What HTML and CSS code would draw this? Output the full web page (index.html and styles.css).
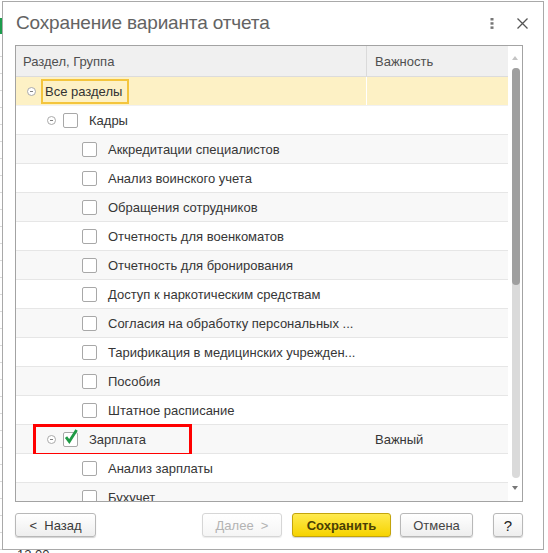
FILE: index.html
```html
<!DOCTYPE html>
<html lang="ru">
<head>
<meta charset="utf-8">
<title>Сохранение варианта отчета</title>
<link rel="stylesheet" href="styles.css">
</head>
<body>
<div class="backdrop">
  <div class="bg-lines"></div>
  <div class="bg-green"></div>
  <div class="bg-text">12.00</div>
</div>

<div class="dialog">
  <div class="titlebar">
    <div class="title">Сохранение варианта отчета</div>
    <div class="tools">
      <svg class="dots" width="4" height="11" viewBox="0 0 4 11"><rect x="0.5" y="0" width="3" height="2.5" fill="#777"/><rect x="0.5" y="4.2" width="3" height="2.5" fill="#777"/><rect x="0.5" y="8.4" width="3" height="2.5" fill="#777"/></svg>
      <svg class="close" width="11" height="11" viewBox="0 0 11 11"><path d="M0.5 0.5 L10.5 10.5 M10.5 0.5 L0.5 10.5" stroke="#555" stroke-width="1.3" fill="none"/></svg>
    </div>
  </div>

  <div class="table">
    <div class="grid">
      <div class="head">
        <div class="c1">Раздел, Группа</div>
        <div class="c2">Важность</div>
      </div>
      <div class="rows">
        <div class="row selected">
          <div class="c1 l0"><span class="exp"></span><span class="selbox">Все разделы</span></div>
          <div class="c2"></div>
        </div>
        <div class="row">
          <div class="c1 l1"><span class="exp"></span><span class="cb"></span><span class="txt">Кадры</span></div>
          <div class="c2"></div>
        </div>
        <div class="row">
          <div class="c1 l2"><span class="cb"></span><span class="txt">Аккредитации специалистов</span></div>
          <div class="c2"></div>
        </div>
        <div class="row">
          <div class="c1 l2"><span class="cb"></span><span class="txt">Анализ воинского учета</span></div>
          <div class="c2"></div>
        </div>
        <div class="row">
          <div class="c1 l2"><span class="cb"></span><span class="txt">Обращения сотрудников</span></div>
          <div class="c2"></div>
        </div>
        <div class="row">
          <div class="c1 l2"><span class="cb"></span><span class="txt">Отчетность для военкоматов</span></div>
          <div class="c2"></div>
        </div>
        <div class="row">
          <div class="c1 l2"><span class="cb"></span><span class="txt">Отчетность для бронирования</span></div>
          <div class="c2"></div>
        </div>
        <div class="row">
          <div class="c1 l2"><span class="cb"></span><span class="txt">Доступ к наркотическим средствам</span></div>
          <div class="c2"></div>
        </div>
        <div class="row">
          <div class="c1 l2"><span class="cb"></span><span class="txt">Согласия на обработку персональных ...</span></div>
          <div class="c2"></div>
        </div>
        <div class="row">
          <div class="c1 l2"><span class="cb"></span><span class="txt">Тарификация в медицинских учрежден...</span></div>
          <div class="c2"></div>
        </div>
        <div class="row">
          <div class="c1 l2"><span class="cb"></span><span class="txt">Пособия</span></div>
          <div class="c2"></div>
        </div>
        <div class="row">
          <div class="c1 l2"><span class="cb"></span><span class="txt">Штатное расписание</span></div>
          <div class="c2"></div>
        </div>
        <div class="row marked">
          <div class="c1 l1"><span class="exp"></span><span class="cb checked"><svg width="15" height="15" viewBox="0 0 15 15"><path d="M3 7.2 L6.3 11.6 L13.6 0" stroke="#1f9a45" stroke-width="2.8" fill="none" stroke-linejoin="miter"/></svg></span><span class="txt">Зарплата</span></div>
          <div class="c2">Важный</div>
          <div class="redframe"></div>
        </div>
        <div class="row">
          <div class="c1 l2"><span class="cb"></span><span class="txt">Анализ зарплаты</span></div>
          <div class="c2"></div>
        </div>
        <div class="row">
          <div class="c1 l2"><span class="cb"></span><span class="txt">Бухучет</span></div>
          <div class="c2"></div>
        </div>
      </div>
    </div>
    <div class="scroll">
      <div class="arrow up"></div>
      <div class="track"><div class="thumb"></div></div>
      <div class="arrow down"></div>
    </div>
  </div>

  <div class="buttons">
    <button class="btn back">&lt;&nbsp; Назад</button>
    <span class="spacer"></span>
    <button class="btn next" disabled>Далее &nbsp;&gt;</button>
    <button class="btn save">Сохранить</button>
    <button class="btn cancel">Отмена</button>
    <button class="btn help">?</button>
  </div>
</div>
</body>
</html>
```

FILE: styles.css
```css
* { box-sizing: border-box; }

html, body {
  margin: 0;
  padding: 0;
  width: 548px;
  height: 553px;
  overflow: hidden;
  background: #ffffff;
  font-family: "Liberation Sans", Arial, sans-serif;
  font-size: 13px;
  color: #333;
}

body { position: relative; }

/* background application behind the modal window */
.backdrop {
  position: absolute;
  inset: 0;
}
.bg-lines {
  position: absolute;
  left: 0;
  top: 40px;
  width: 3px;
  height: 513px;
  background: repeating-linear-gradient(to bottom, #fff 0, #fff 16px, #d9d9d9 16px, #d9d9d9 17px);
}
.bg-green {
  position: absolute;
  left: 0;
  top: 18px;
  width: 2px;
  height: 16px;
  background: #1c9c4c;
}
.bg-text {
  position: absolute;
  left: 17px;
  top: 547px;
  font-size: 13px;
  color: #333;
}

/* modal window */
.dialog {
  position: absolute;
  left: 2px;
  top: 1px;
  width: 542px;
  height: 549px;
  background: #fff;
  border: 1px solid #a9a9a9;
  padding: 0 12px 12px 12px;
  display: flex;
  flex-direction: column;
}

.titlebar {
  height: 43px;
  display: flex;
  justify-content: space-between;
  align-items: flex-start;
}
.title {
  padding-top: 9px;
  padding-left: 1px;
  font-size: 19px;
  letter-spacing: -0.15px;
  line-height: 24px;
  color: #636363;
}
.tools {
  display: flex;
  align-items: center;
  padding-top: 16px;
  margin-right: 3px;
}
.dots { display: block; margin-right: 23px; }
.close { display: block; }

/* table */
.table {
  width: 508px;
  height: 457px;
  border: 1px solid #a3a3a3;
  display: flex;
}
.grid {
  flex: 1;
  display: flex;
  flex-direction: column;
  min-width: 0;
}
.head {
  height: 31px;
  flex: none;
  background: #f0f0f0;
  border-bottom: 1px solid #dcdcdc;
  display: flex;
  color: #4f4f4f;
}
.head .c1 {
  width: 351px;
  border-right: 1px solid #dadada;
  padding-left: 7px;
  display: flex;
  align-items: center;
}
.head .c2 {
  flex: 1;
  padding-left: 8px;
  display: flex;
  align-items: center;
}

.rows {
  flex: 1;
  overflow: hidden;
}
.row {
  position: relative;
  height: 29px;
  border-bottom: 1px solid #e6e6e6;
  display: flex;
  background: #fff;
  color: #363636;
}
.row:nth-child(odd) { background: #f8f8f8; }
.row.selected {
  background: #fdf1c5;
  border-bottom-color: #f1f1f1;
}
.row .c1 {
  width: 351px;
  display: flex;
  align-items: center;
  white-space: nowrap;
}
.row.selected .c1 { border-right: 1px solid #fff; }
.row .c2 {
  flex: 1;
  padding-left: 8px;
  display: flex;
  align-items: center;
}

.l0 { padding-left: 11px; }
.l1 { padding-left: 31px; }
.l2 { padding-left: 66px; }

.exp {
  width: 9px;
  height: 9px;
  margin-right: 7px;
  border: 1px solid #aaaaaa;
  border-radius: 50%;
  background: #fff;
  position: relative;
  flex: none;
}
.exp::after {
  content: "";
  position: absolute;
  left: 2px;
  top: 3px;
  width: 3px;
  height: 1px;
  background: #808080;
}
.l0 .exp { margin-right: 5px; }

.selbox {
  height: 25px;
  margin-top: 1px;
  border: 2px solid #f4c53d;
  padding: 0 5px 0 2px;
  display: flex;
  align-items: center;
  color: #333;
}

.cb {
  width: 15px;
  height: 15px;
  flex: none;
  border: 1px solid #a8a8a8;
  border-radius: 2px;
  background: #fff;
  margin-right: 11px;
  position: relative;
}
.cb svg {
  position: absolute;
  left: -1px;
  top: -3px;
  overflow: visible;
}

.redframe {
  position: absolute;
  left: 17px;
  top: -1px;
  width: 159px;
  height: 32px;
  border: 3px solid #ff0000;
  pointer-events: none;
}

/* scrollbar */
.scroll {
  width: 14px;
  flex: none;
  background: #fff;
  display: flex;
  flex-direction: column;
  align-items: center;
  padding-top: 10px;
}
.arrow {
  width: 0;
  height: 0;
  border-left: 3px solid transparent;
  border-right: 3px solid transparent;
}
.arrow.up { border-bottom: 4px solid #c4c4c4; }
.arrow.down { border-top: 4px solid #777; margin-top: 8px; }
.track {
  margin-top: 8px;
  width: 8px;
  height: 410px;
  border-radius: 4px;
  background: #dadada;
  margin-left: 1px;
}
.thumb {
  width: 8px;
  height: 217px;
  border-radius: 4px;
  background: #9f9f9f;
}

/* buttons */
.buttons {
  width: 508px;
  margin-top: 11px;
  display: flex;
  align-items: center;
}
.spacer { flex: 1; }
.btn {
  height: 24px;
  padding: 0;
  font-family: "Liberation Sans", Arial, sans-serif;
  font-size: 13px;
  color: #3a3a3a;
  border: 1px solid #b8b8b8;
  border-radius: 3px;
  background: linear-gradient(to bottom, #ffffff, #eeeeee);
  box-shadow: 0 1px 1px rgba(0,0,0,0.18);
  display: flex;
  align-items: center;
  justify-content: center;
}
.back { width: 81px; }
.next {
  width: 80px;
  color: #b3b3b3;
  border-color: #d6d6d6;
  box-shadow: 0 1px 1px rgba(0,0,0,0.08);
  background: linear-gradient(to bottom, #ffffff, #f5f5f5);
}
.save {
  width: 99px;
  margin-left: 10px;
  font-weight: bold;
  color: #4a3f05;
  border-color: #c3a40c;
  background: linear-gradient(to bottom, #ffea4f, #f6d300);
}
.cancel {
  width: 73px;
  margin-left: 9px;
  color: #444;
}
.help {
  width: 30px;
  margin-left: 20px;
  font-size: 15px;
  color: #222;
}
```
